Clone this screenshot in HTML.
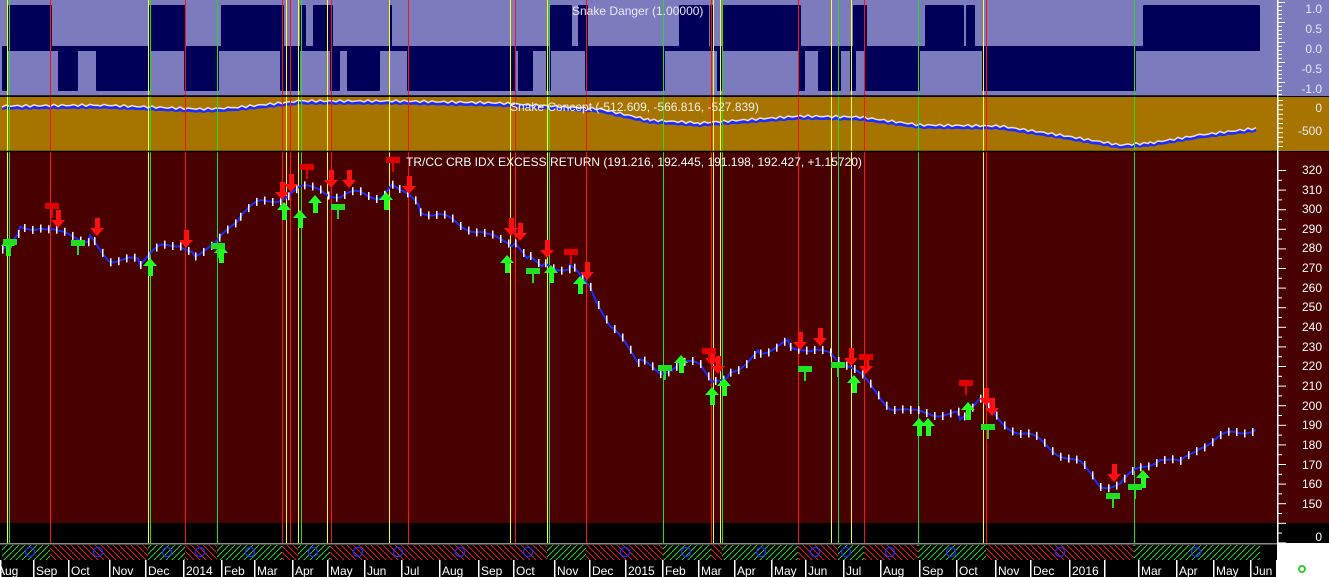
<!DOCTYPE html>
<html><head><meta charset="utf-8">
<style>
html,body{margin:0;padding:0;background:#000;width:1329px;height:577px;overflow:hidden;font-family:"Liberation Sans",sans-serif}
svg{position:absolute;left:0;top:0}
text{font-family:"Liberation Sans",sans-serif}
</style></head><body>
<svg id="s" width="1329" height="577" xmlns="http://www.w3.org/2000/svg">
<defs>
<pattern id="hg" width="6" height="6" patternUnits="userSpaceOnUse"><rect width="6" height="6" fill="#000"/><path d="M0,6 L6,0" stroke="#2fd02f" stroke-width="1"/></pattern>
<pattern id="hr" width="6" height="6" patternUnits="userSpaceOnUse"><rect width="6" height="6" fill="#000"/><path d="M0,0 L6,6" stroke="#e02020" stroke-width="1"/></pattern>
</defs>
<rect x="0" y="0" width="1329" height="96" fill="#7b7bbd"/>
<rect x="0" y="97" width="1329" height="54" fill="#a87400"/>
<rect x="0" y="152" width="1329" height="371" fill="#480000"/>
<rect x="0" y="523" width="1329" height="54" fill="#000"/>
<rect x="1277" y="543" width="52" height="34" fill="#fff"/>
<g id="top"></g>
<g id="mid"></g>
<g id="vl"></g>
<g id="main"></g>
<g id="hatch"></g>
<line x1="0" y1="96" x2="1277" y2="96" stroke="#000" stroke-width="1.5"/>
<line x1="0" y1="151.5" x2="1277" y2="151.5" stroke="#000" stroke-width="1.5"/>
<rect x="0" y="543" width="1277" height="1.5" fill="#888"/>
<g id="axis"></g>
<g fill="#e8e8ff" font-size="12" text-anchor="end">
<text x="1322" y="13">1.0</text><text x="1322" y="33">0.5</text><text x="1322" y="53">0.0</text><text x="1322" y="73">-0.5</text><text x="1322" y="93">-1.0</text>
<text x="1322" y="112">0</text><text x="1322" y="135">-500</text>
</g>
<g fill="#fff" font-size="12" text-anchor="end">
<text x="1322" y="174">320</text><text x="1322" y="194">310</text><text x="1322" y="213">300</text><text x="1322" y="233">290</text><text x="1322" y="252">280</text><text x="1322" y="272">270</text><text x="1322" y="292">260</text><text x="1322" y="311">250</text><text x="1322" y="331">240</text><text x="1322" y="351">230</text><text x="1322" y="370">220</text><text x="1322" y="390">210</text><text x="1322" y="410">200</text><text x="1322" y="429">190</text><text x="1322" y="449">180</text><text x="1322" y="469">170</text><text x="1322" y="488">160</text><text x="1322" y="508">150</text><text x="1322" y="541">0</text>
</g>
<text x="572" y="15" fill="#e8e8ff" font-size="12">Snake Danger (1.00000)</text>
<text x="510" y="111" fill="#f0f0f0" font-size="12">Snake Concept (-512.609, -566.816, -527.839)</text>
<text x="406" y="166" fill="#fff" font-size="12">TR/CC CRB IDX EXCESS RETURN (191.216, 192.445, 191.198, 192.427, +1.15720)</text>
<g id="dates" fill="#fff" font-size="12">
<text x="-3" y="575">Aug</text><text x="36" y="575">Sep</text><text x="71" y="575">Oct</text><text x="112" y="575">Nov</text><text x="148" y="575">Dec</text><text x="186" y="575">2014</text><text x="224" y="575">Feb</text><text x="257" y="575">Mar</text><text x="295" y="575">Apr</text><text x="330" y="575">May</text><text x="367" y="575">Jun</text><text x="404" y="575">Jul</text><text x="442" y="575">Aug</text><text x="481" y="575">Sep</text><text x="516" y="575">Oct</text><text x="557" y="575">Nov</text><text x="592" y="575">Dec</text><text x="628" y="575">2015</text><text x="665" y="575">Feb</text><text x="701" y="575">Mar</text><text x="737" y="575">Apr</text><text x="774" y="575">May</text><text x="808" y="575">Jun</text><text x="846" y="575">Jul</text><text x="883" y="575">Aug</text><text x="922" y="575">Sep</text><text x="959" y="575">Oct</text><text x="998" y="575">Nov</text><text x="1033" y="575">Dec</text><text x="1072" y="575">2016</text><text x="1141" y="575">Mar</text><text x="1179" y="575">Apr</text><text x="1216" y="575">May</text><text x="1253" y="575">Jun</text>
</g>
<g id="sep"></g>
<circle cx="1302" cy="569" r="3" fill="none" stroke="#3c3" stroke-width="2"/>
</svg>
<script>
var NS="http://www.w3.org/2000/svg";
function el(p,t,a){var e=document.createElementNS(NS,t);for(var k in a)e.setAttribute(k,a[k]);document.getElementById(p).appendChild(e);return e;}
var N="#000058";
el("top","rect",{x:2,y:46,width:1258,height:5,fill:N});
[[8,52],[149,186],[221,284],[300,306],[313,333],[389,392],[550,572],[578,588],[679,709],[710,714],[722,801],[853,867],[925,964],[966,975],[1143,1260]].forEach(function(b){el("top","rect",{x:b[0],y:5,width:b[1]-b[0],height:46,fill:N,rx:1});});
[[2,8],[58,78],[96,150],[184,219],[280,300],[330,340],[347,380],[407,516],[518,533],[546,551],[585,665],[717,722],[798,805],[818,841],[850,856],[865,920],[982,1136]].forEach(function(b){el("top","rect",{x:b[0],y:46,width:b[1]-b[0],height:45,fill:N,rx:1});});
var mp=[[2,107],[100,106],[200,110],[230,109],[300,102],[400,102],[500,104],[600,110],[650,121],[700,124],[800,117],[860,118],[920,126],[1000,127],[1060,136],[1120,146],[1150,144],[1200,136],[1258,129]];
function dense(a,j){var r=[];for(var i=0;i<a.length-1;i++){for(var x=a[i][0];x<a[i+1][0];x+=4){var t=(x-a[i][0])/(a[i+1][0]-a[i][0]);r.push([x,a[i][1]+t*(a[i+1][1]-a[i][1])+Math.sin(x*0.9)*j]);}}return r;}
var md=dense(mp,0.6);
el("mid","polyline",{points:md.map(function(p){return p[0]+","+(p[1]+1)}).join(" "),fill:"none",stroke:"#1a2cff","stroke-width":3});
el("mid","polyline",{points:dense(mp,1.2).map(function(p){return p[0]+","+(p[1]-1)}).join(" "),fill:"none",stroke:"#f0e0d0","stroke-width":1.5});
var C={r:"#ff1010",y:"#ffff20",g:"#20e020"};
[[7,"y"],[9,"g"],[50,"r"],[148,"y"],[150,"g"],[185,"r"],[217,"g"],[282,"r"],[286,"y"],[290,"r"],[298,"y"],[301,"g"],[327,"y"],[331,"r"],[389,"y"],[408,"r"],[510,"y"],[515,"r"],[547,"y"],[549,"g"],[586,"r"],[663,"g"],[711,"r"],[713,"y"],[720,"y"],[722,"g"],[798,"r"],[831,"y"],[838,"g"],[851,"y"],[864,"r"],[918,"g"],[983,"y"],[986,"r"],[1134,"g"]].forEach(function(v){el("vl","rect",{x:v[0],y:0,width:1,height:543,fill:C[v[1]]});});
function Y(p){return 170+(320-p)*1.965;}
var pp=[[2,280],[20,290],[40,292],[60,287],[90,285],[110,275],[140,273],[160,280],[180,283],[195,278],[215,281],[240,297],[260,303],[280,306],[300,310],[320,311],[340,306],[360,308],[380,307],[395,313],[420,300],[440,297],[460,291],[480,290],[500,283],[515,281],[530,275],[545,272],[570,270],[590,262],[610,240],[640,222],[660,217],[680,222],[700,220],[715,212],[730,217],[760,228],[790,232],[810,226],[830,228],[850,220],[870,210],[890,200],[910,196],[930,197],[960,195],[980,202],[1000,193],[1020,186],[1040,182],[1060,176],[1080,170],[1100,160],[1120,160],[1140,168],[1160,174],[1180,170],[1200,180],[1220,184],[1240,186],[1258,190]];
var pts=[];for(var i=0;i<pp.length-1;i++){for(var x=pp[i][0];x<pp[i+1][0];x+=4){var t=(x-pp[i][0])/(pp[i+1][0]-pp[i][0]);var p=pp[i][1]+t*(pp[i+1][1]-pp[i][1])+Math.sin(x*1.7)*2;pts.push([x,Y(p)]);}}
el("main","polyline",{points:pts.map(function(q){return q[0]+","+q[1]}).join(" "),fill:"none",stroke:"#1a2cff","stroke-width":2});
pts.forEach(function(q,i){if(i%2==0)el("main","rect",{x:q[0],y:q[1]-4,width:1.5,height:8,fill:"#fff"});});
function down(x,y){el("main","rect",{x:x-2,y:y-18,width:5,height:10,fill:"#ff1010"});el("main","polygon",{points:(x-7)+","+(y-8)+" "+(x+7)+","+(y-8)+" "+x+","+y,fill:"#ff1010"});}
function up(x,y){el("main","polygon",{points:(x-7)+","+(y+8)+" "+(x+7)+","+(y+8)+" "+x+","+y,fill:"#20ff20"});el("main","rect",{x:x-2,y:y+8,width:5,height:10,fill:"#20ff20"});}
function sign(x,y,c){el("main","rect",{x:x-7,y:y,width:14,height:6,fill:c});el("main","rect",{x:x-1,y:y+6,width:2,height:9,fill:c});}
[[58,228],[97,236],[186,248],[282,200],[291,192],[331,188],[349,188],[409,194],[511,236],[520,241],[547,258],[587,280],[712,366],[718,374],[800,350],[820,346],[851,366],[866,374],[986,406],[992,416],[1114,482]].forEach(function(a){down(a[0],a[1]);});
[[8,238],[150,258],[221,245],[284,202],[300,210],[315,195],[386,192],[507,255],[551,265],[580,276],[681,355],[712,387],[724,378],[854,375],[919,418],[928,418],[968,402],[1143,470]].forEach(function(a){up(a[0],a[1]);});
[[52,203,"#e00000"],[307,164,"#e00000"],[393,157,"#e00000"],[571,249,"#e00000"],[709,348,"#e00000"],[866,354,"#e00000"],[966,380,"#e00000"],[10,239,"#20e020"],[78,240,"#20e020"],[218,243,"#20e020"],[338,204,"#20e020"],[533,268,"#20e020"],[665,365,"#20e020"],[805,366,"#20e020"],[838,362,"#20e020"],[988,424,"#20e020"],[1113,493,"#20e020"],[1135,484,"#20e020"]].forEach(function(a){sign(a[0],a[1],a[2]);});
[[2,50,"g"],[50,148,"r"],[148,185,"g"],[185,217,"r"],[217,282,"g"],[282,298,"r"],[298,330,"g"],[330,408,"r"],[408,510,"r"],[510,547,"r"],[547,586,"g"],[586,663,"r"],[663,711,"g"],[711,722,"r"],[722,798,"g"],[798,838,"r"],[838,864,"g"],[864,918,"r"],[918,986,"g"],[986,1134,"r"],[1134,1260,"g"]].forEach(function(h){el("hatch","rect",{x:h[0],y:545,width:h[1]-h[0],height:15,fill:"url(#h"+h[2]+")"});});
[30,98,167,200,250,313,358,398,460,528,625,686,761,815,846,890,951,1060,1196].forEach(function(x){el("hatch","circle",{cx:x,cy:552,r:4.5,fill:"none",stroke:"#1a2cff","stroke-width":1.3});});
el("axis","rect",{x:1277,y:0,width:1.5,height:543,fill:"#fff"});
for(var yy=2;yy<96;yy+=4)el("axis","rect",{x:1278,y:yy,width:(yy%20<4)?7:4,height:1,fill:"#fff"});
for(var yy=100;yy<150;yy+=4.6)el("axis","rect",{x:1278,y:yy,width:5,height:1,fill:"#fff"});
for(var yy=170;yy<543;yy+=9.8)el("axis","rect",{x:1278,y:yy,width:(Math.round((yy-170)/9.8)%2==0)?8:4,height:1,fill:"#fff"});
[0,33,68,109,145,183,221,254,292,327,364,401,439,478,513,554,589,625,662,698,734,771,805,843,880,919,956,995,1030,1069,1104,1138,1176,1213,1250,1276].forEach(function(x){el("sep","rect",{x:x,y:560,width:1.5,height:17,fill:"#fff"});});
</script>
</body></html>
